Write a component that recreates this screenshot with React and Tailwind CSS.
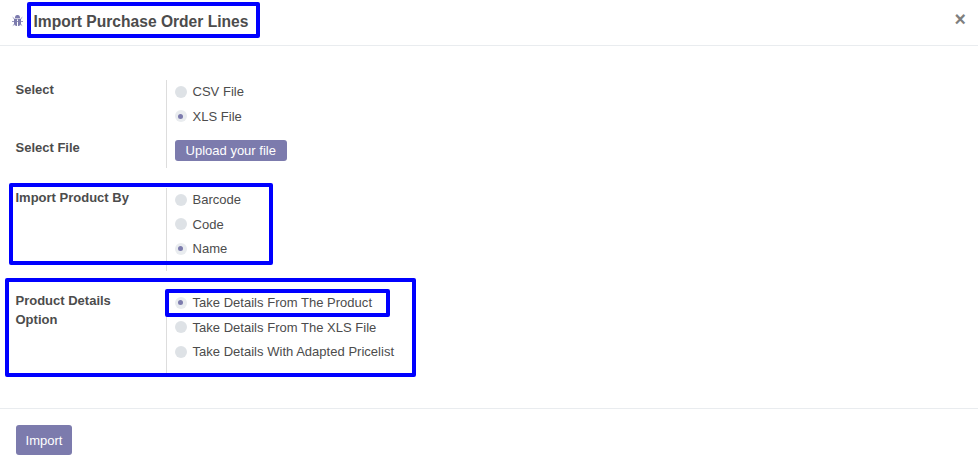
function BugIcon() {
  return (
    <svg viewBox="0 0 12 12" className="mb-[3px] h-3 w-3 shrink-0 fill-[#7c7bad]">
      <path d="M3 3V2Q3.500 0 5 0H6Q7.500 0 8 2V3Z" />
      <path d="M2 4H5V11H4.500Q2 10.500 2 8.500ZM6 4H9V8.500Q9 10.500 6.500 11H6Z" />
      <path d="M0.700 2.300L2.500 4H8.500L10.300 2.300M0 6.500H11M0.800 10.600L2.800 8.800M10.200 10.600L8.200 8.800" fill="none" stroke="#7c7bad" strokeOpacity="0.85" strokeWidth="0.95" />
    </svg>
  );
}

function Radio({ label, checked }) {
  return (
    <label className="mb-[5px] flex h-[19.5px] items-center">
      <span
        className={
          checked
            ? "mr-[5.5px] flex size-3 items-center justify-center rounded-full bg-[#e9ecef]"
            : "mr-[5.5px] flex size-3 items-center justify-center rounded-full bg-[#dee2e6]"
        }
      >
        {checked && <span className="mr-px size-[5px] rounded-full bg-[#7c7bad]" />}
      </span>
      <span className="tracking-[0.02px]">{label}</span>
    </label>
  );
}

function Label({ children }) {
  return <div className="w-[150.5px] shrink-0 pr-8 font-bold leading-[19px]">{children}</div>;
}

function Field({ children }) {
  return <div className="border-l border-[#dddddd] pl-2 pt-[2px]">{children}</div>;
}

function Highlight({ className }) {
  return <div className={`pointer-events-none absolute rounded-[2px] border-4 border-[#0000ff] ${className}`} />;
}

export default function App() {
  return (
    <div className="relative flex h-[474px] w-[978px] flex-col overflow-hidden bg-white font-['Liberation_Sans',Arial,sans-serif] text-[13px] leading-[19.5px] text-[#4c4c4c]">
      <header className="flex h-[46px] shrink-0 items-center border-b border-[#e9ecef] pl-3 pr-3">
        <BugIcon />
        <h4 className="mb-[2px] ml-[9.5px] text-[15.6px] font-bold leading-6">Import Purchase Order Lines</h4>
        <button className="mb-2 ml-auto text-[19.5px] font-bold leading-5 text-[#7f7f7f]">×</button>
      </header>

      <main className="flex h-[362px] shrink-0 flex-col gap-5 pl-[15.5px] pt-[34px]">
        <section>
          <div className="flex h-[58px]">
            <Label>Select</Label>
            <Field>
              <Radio label="CSV File" />
              <Radio label="XLS File" checked />
            </Field>
          </div>
          <div className="flex h-[30px]">
            <Label>Select File</Label>
            <Field>
              <button className="block h-[21px] w-28 rounded-[3px] bg-[#7c7bad] pr-[0.5px] text-center leading-[21px] text-white">
                Upload your file
              </button>
            </Field>
          </div>
        </section>

        <section className="flex h-[83px]">
          <Label>Import Product By</Label>
          <Field>
            <Radio label="Barcode" />
            <Radio label="Code" />
            <Radio label="Name" checked />
          </Field>
        </section>

        <section className="flex h-[83px]">
          <Label>Product Details Option</Label>
          <Field>
            <Radio label="Take Details From The Product" checked />
            <Radio label="Take Details From The XLS File" />
            <Radio label="Take Details With Adapted Pricelist" />
          </Field>
        </section>
      </main>

      <footer className="flex flex-1 items-start border-t border-[#e9ecef] pl-4 pt-4">
        <button className="h-[30px] w-14 rounded-[3px] bg-[#7c7bad] pt-px text-white">Import</button>
      </footer>

      <Highlight className="left-[27px] top-[2px] h-9 w-[233px]" />
      <Highlight className="left-[9px] top-[183px] h-[82px] w-[264px]" />
      <Highlight className="left-[5px] top-[278px] h-[99px] w-[411px]" />
      <Highlight className="left-[165px] top-[289px] h-7 w-[225px]" />
    </div>
  );
}
